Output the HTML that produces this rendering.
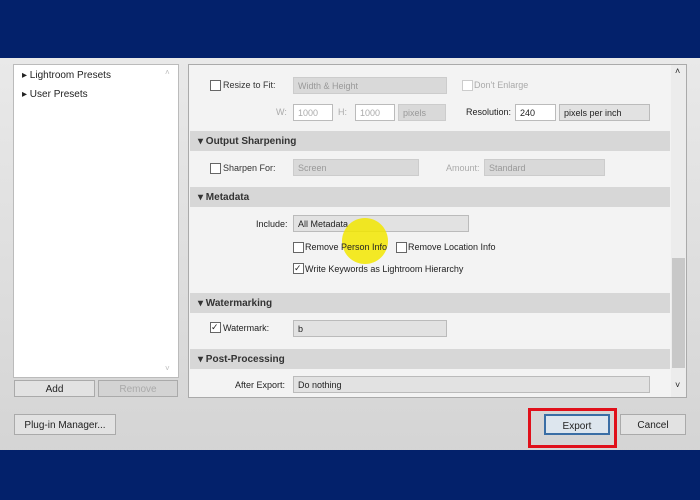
<!DOCTYPE html>
<html><head><style>
*{box-sizing:border-box;margin:0;padding:0}
body{width:700px;height:500px;overflow:hidden;position:relative;font-family:"Liberation Sans",sans-serif;font-size:9px;color:#222;background:linear-gradient(#ececec,#d2d2d2)}
.a{position:absolute}
.blue{background:#03216b;left:0;width:700px}
.hdr{background:#d7d7d7;left:190px;width:480px;height:20px;font-weight:bold;font-size:10px;padding:5px 0 0 8px;color:#333}
.sel{background:#d9d9d9;border:1px solid #ccc;height:17px;padding:3px 4px;color:#999}
.sel.on{color:#222;background:#e2e2e2;border-color:#bbb}
.cb{width:11px;height:11px;border:1px solid #666;background:#fff}
.inp{background:#fff;border:1px solid #bbb;height:17px;padding:3px 4px}
.btn{border:1px solid #aaa;background:#e2e2e2;height:21px;text-align:center;padding-top:5px;font-size:10px}
.lab{color:#333}
.dim{color:#aaa}
</style></head><body>
<div class="a blue" style="top:0;height:58px"></div>
<div class="a blue" style="top:450px;height:50px"></div>

<div class="a" style="left:13px;top:64px;width:166px;height:314px;background:#fff;border:1px solid #bbb"></div>
<div class="a" style="left:22px;top:70px;font-size:10px">▸ Lightroom Presets</div>
<div class="a" style="left:22px;top:89px;font-size:10px">▸ User Presets</div>
<div class="a" style="left:165px;top:68px;color:#bbb;font-size:8px">˄</div>
<div class="a" style="left:165px;top:364px;color:#bbb;font-size:8px">˅</div>
<div class="a btn" style="left:14px;top:380px;width:81px;height:17px;padding-top:3px">Add</div>
<div class="a btn dim" style="left:98px;top:380px;width:80px;height:17px;padding-top:3px;background:#d3d3d3">Remove</div>

<div class="a" style="left:188px;top:64px;width:499px;height:334px;background:#f3f3f3;border:1px solid #aaa"></div>
<div class="a" style="left:671px;top:65px;width:15px;height:332px;background:#ececec"></div>
<div class="a" style="left:672px;top:258px;width:13px;height:110px;background:#c8c8c8"></div>
<div class="a" style="left:675px;top:66px;font-size:9px">˄</div>
<div class="a" style="left:675px;top:380px;font-size:9px">˅</div>

<div class="a cb" style="left:210px;top:80px"></div><div class="a lab" style="left:223px;top:80px">Resize to Fit:</div>
<div class="a sel" style="left:293px;top:77px;width:154px">Width &amp; Height</div>
<div class="a cb" style="left:462px;top:80px;border-color:#ccc"></div><div class="a dim" style="left:474px;top:80px">Don't Enlarge</div>
<div class="a dim" style="left:276px;top:107px">W:</div><div class="a inp dim" style="left:293px;top:104px;width:40px">1000</div>
<div class="a dim" style="left:338px;top:107px">H:</div><div class="a inp dim" style="left:355px;top:104px;width:40px">1000</div>
<div class="a sel" style="left:398px;top:104px;width:48px">pixels</div>
<div class="a" style="left:466px;top:107px">Resolution:</div><div class="a inp" style="left:515px;top:104px;width:41px">240</div>
<div class="a sel on" style="left:559px;top:104px;width:91px">pixels per inch</div>

<div class="a hdr" style="top:131px">▾ Output Sharpening</div>
<div class="a cb" style="left:210px;top:163px"></div><div class="a lab" style="left:223px;top:163px">Sharpen For:</div>
<div class="a sel" style="left:293px;top:159px;width:126px">Screen</div>
<div class="a dim" style="left:446px;top:163px">Amount:</div>
<div class="a sel" style="left:484px;top:159px;width:121px">Standard</div>

<div class="a hdr" style="top:187px">▾ Metadata</div>
<div class="a" style="left:256px;top:219px">Include:</div>
<div class="a sel on" style="left:293px;top:215px;width:176px">All Metadata</div>
<div class="a" style="left:342px;top:218px;width:46px;height:46px;border-radius:50%;background:#f2e600;opacity:.85"></div>
<div class="a cb" style="left:293px;top:242px"></div><div class="a" style="left:305px;top:242px">Remove Person Info</div>
<div class="a cb" style="left:396px;top:242px"></div><div class="a" style="left:408px;top:242px">Remove Location Info</div>
<div class="a cb" style="left:293px;top:263px;font-size:9px;line-height:9px">✓</div><div class="a" style="left:305px;top:264px">Write Keywords as Lightroom Hierarchy</div>

<div class="a hdr" style="top:293px">▾ Watermarking</div>
<div class="a cb" style="left:210px;top:322px;font-size:9px;line-height:9px">✓</div><div class="a" style="left:223px;top:323px">Watermark:</div>
<div class="a sel on" style="left:293px;top:320px;width:154px">b</div>

<div class="a hdr" style="top:349px">▾ Post-Processing</div>
<div class="a" style="left:235px;top:380px">After Export:</div>
<div class="a sel on" style="left:293px;top:376px;width:357px">Do nothing</div>

<div class="a btn" style="left:14px;top:414px;width:102px">Plug-in Manager...</div>
<div class="a" style="left:528px;top:408px;width:89px;height:40px;border:3px solid #e0101a"></div>
<div class="a btn" style="left:544px;top:414px;width:66px;border:2px solid #3a6ea5;background:#dde6ee">Export</div>
<div class="a btn" style="left:620px;top:414px;width:66px">Cancel</div>
</body></html>
